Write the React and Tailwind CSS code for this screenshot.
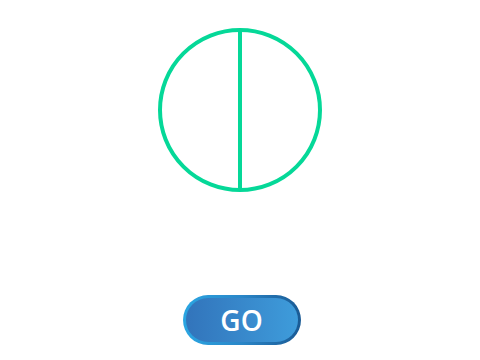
import React from 'react';

function GoButton() {
  return (
    <button className="ml-[3px] mt-[101px] h-[50px] w-[118px] rounded-full bg-gradient-to-r from-[#2aa6e2] via-[#2a86c8] to-[#1a5a94] p-[3px]">
      <span className="flex h-full w-full items-center justify-center rounded-full bg-gradient-to-r from-[#3274bb] to-[#3e9cdb] text-[28px] font-semibold text-white [font-family:'Open_Sans',sans-serif]">
        GO
      </span>
    </button>
  );
}

export default function App() {
  return (
    <div className="flex h-[360px] w-[480px] flex-col items-center bg-white pt-[26px]">
      <svg width="168" height="168" viewBox="0 0 168 168" className="ml-[-1px]">
        <circle cx="84" cy="84" r="80" fill="none" stroke="#05d898" strokeWidth="4" />
        <line x1="84" y1="4" x2="84" y2="164" stroke="#05d898" strokeWidth="4" />
      </svg>
      <GoButton />
    </div>
  );
}
